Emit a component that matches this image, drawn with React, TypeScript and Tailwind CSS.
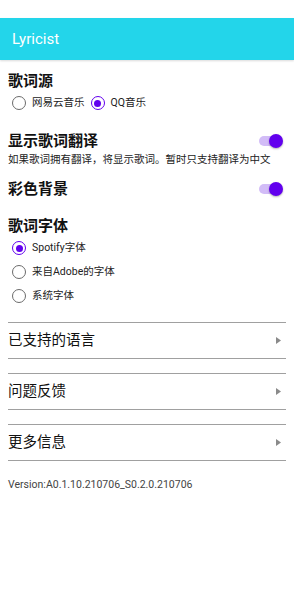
import { useState } from "react";

const font = { fontFamily: 'Roboto, "Noto Sans CJK SC", sans-serif' };

function Radio({ checked, label, onClick }: { checked: boolean; label: string; onClick: () => void }) {
  return (
    <button type="button" onClick={onClick} className="flex h-6 items-center gap-[6px] pl-1">
      <span
        className={`flex h-[14px] w-[14px] items-center justify-center rounded-full border-[1.5px] ${
          checked ? "border-[#6200ee]" : "border-[#6b6b6b]"
        }`}
      >
        {checked && <span className="h-[7px] w-[7px] rounded-full bg-[#6200ee]" />}
      </span>
      <span className="text-[10.5px] text-[#222]">{label}</span>
    </button>
  );
}

function Toggle({ on, onClick }: { on: boolean; onClick: () => void }) {
  return (
    <button type="button" onClick={onClick} className="relative mr-[3px] h-[14px] w-[26px]">
      <span className={`absolute left-[2px] top-[2px] h-[10px] w-[22px] rounded-full ${on ? "bg-[#d2bcf7]" : "bg-[#bdbdbd]"}`} />
      <span
        className={`absolute top-0 h-[14px] w-[14px] rounded-full shadow-[0_1px_2px_rgba(0,0,0,0.3)] ${
          on ? "right-0 bg-[#6200ee]" : "left-0 bg-[#f1f1f1]"
        }`}
      />
    </button>
  );
}

function LinkItem({ label }: { label: string }) {
  return (
    <div className="flex h-[37px] items-center justify-between border-y-[1.5px] border-[#a0a0a0]">
      <span className="text-[14.5px] text-[#111]">{label}</span>
      <svg width="5" height="7" viewBox="0 0 5 7" className="mr-[5px]">
        <path d="M0 0 L5 3.5 L0 7 Z" fill="#8a8a8a" />
      </svg>
    </div>
  );
}

export default function App() {
  const [source, setSource] = useState("qq");
  const [translate, setTranslate] = useState(true);
  const [colorBg, setColorBg] = useState(true);
  const [fontChoice, setFontChoice] = useState("spotify");

  return (
    <div className="min-h-[600px] w-full bg-white" style={font}>
      <div className="h-[18px]" />
      <div className="flex h-[42px] items-center bg-[#23d5ea] px-3 shadow-[0_1px_2px_rgba(0,0,0,0.15)]">
        <span className="text-[15px] text-white">Lyricist</span>
      </div>

      <div className="px-2">
        <div className="mt-[11px] text-[15px] font-bold leading-5 text-[#111]">歌词源</div>
        <div className="flex items-center gap-[2px]">
          <Radio checked={source === "netease"} label="网易云音乐" onClick={() => setSource("netease")} />
          <Radio checked={source === "qq"} label="QQ音乐" onClick={() => setSource("qq")} />
        </div>

        <div className="mt-4 flex items-center justify-between">
          <span className="text-[15px] font-bold leading-5 text-[#111]">显示歌词翻译</span>
          <Toggle on={translate} onClick={() => setTranslate(!translate)} />
        </div>
        <div className="mt-[2px] text-[10.5px] leading-[14px] text-[#222]">如果歌词拥有翻译，将显示歌词。暂时只支持翻译为中文</div>

        <div className="mt-[12px] flex items-center justify-between">
          <span className="text-[15px] font-bold leading-5 text-[#111]">彩色背景</span>
          <Toggle on={colorBg} onClick={() => setColorBg(!colorBg)} />
        </div>

        <div className="mt-[17px] text-[15px] font-bold leading-5 text-[#111]">歌词字体</div>
        <div className="flex flex-col">
          <Radio checked={fontChoice === "spotify"} label="Spotify字体" onClick={() => setFontChoice("spotify")} />
          <Radio checked={fontChoice === "adobe"} label="来自Adobe的字体" onClick={() => setFontChoice("adobe")} />
          <Radio checked={fontChoice === "system"} label="系统字体" onClick={() => setFontChoice("system")} />
        </div>

        <div className="mt-[14px] flex flex-col gap-[14px]">
          <LinkItem label="已支持的语言" />
          <LinkItem label="问题反馈" />
          <LinkItem label="更多信息" />
        </div>

        <div className="mt-4 text-[10.5px] text-[#444]">Version:A0.1.10.210706_S0.2.0.210706</div>
      </div>
    </div>
  );
}
